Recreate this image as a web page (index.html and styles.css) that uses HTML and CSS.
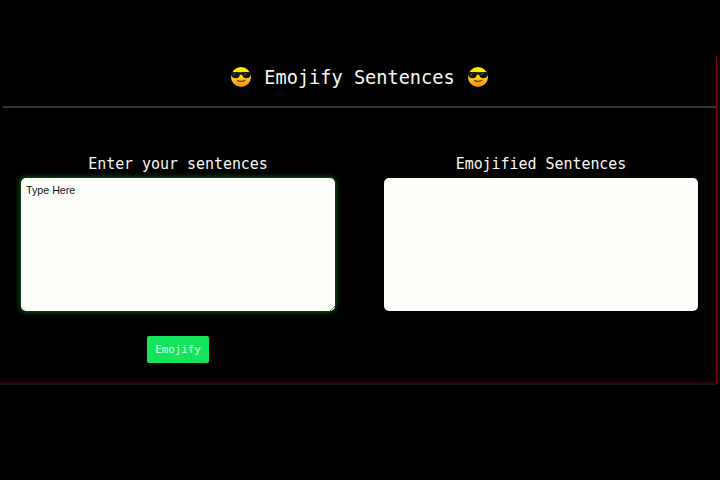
FILE: index.html
```html
<!DOCTYPE html>
<html lang="en">
<head>
<meta charset="utf-8">
<title>Emojify Sentences</title>
<link rel="stylesheet" href="styles.css">
</head>
<body>
<svg width="0" height="0" class="defs" aria-hidden="true">
  <defs>
    <linearGradient id="face" x1="0" y1="0" x2="0" y2="1">
      <stop offset="0" stop-color="#fff200"/>
      <stop offset=".5" stop-color="#fbd51c"/>
      <stop offset="1" stop-color="#f08a12"/>
    </linearGradient>
    <symbol id="cool" viewBox="0 0 22 22">
      <circle cx="11" cy="11" r="10" fill="url(#face)"/>
      <path d="M.5 6.200Q6 5.600 11 6.300Q16 5.600 21.500 6.200L21 8.200Q20.300 12.300 16.200 12.300Q13.100 12.300 12 8.800Q11 8 10 8.800Q8.900 12.300 5.800 12.300Q1.700 12.300 1 8.200Z" fill="#11130f"/>
      <path d="M3.200 9.300L5.500 7M14 9.300L16.300 7" stroke="#77776b" stroke-width="1"/>
      <path d="M7.500 14.600Q11.500 16.400 15 14.200" fill="none" stroke="#60400b" stroke-width="1.300" stroke-linecap="round"/>
    </symbol>
  </defs>
</svg>
<main class="app">
  <h1 class="title">
    <svg class="emoji"><use href="#cool"/></svg>
    <span>Emojify Sentences</span>
    <svg class="emoji"><use href="#cool"/></svg>
  </h1>
  <div class="columns">
    <section class="column">
      <h2 class="label">Enter your sentences</h2>
      <textarea class="box input">Type Here</textarea>
      <button class="button">Emojify</button>
    </section>
    <section class="column">
      <h2 class="label">Emojified Sentences</h2>
      <div class="box"></div>
    </section>
  </div>
</main>
</body>
</html>
```
FILE: styles.css
```css
* { box-sizing: border-box; }
body {
  margin: 0;
  padding-top: 56px;
  height: 480px;
  overflow: hidden;
  background: #000;
  color: #f8f8f4;
  font-family: "DejaVu Sans Mono", monospace;
}
.defs { position: absolute; }
.app {
  width: 717px;
  height: 328px;
  border-right: 1px solid #7a0010;
  border-bottom: 2px solid #2e0206;
  box-shadow: 1px 0 0 #30000a, 0 1px 0 #201415;
}
.title {
  display: flex;
  justify-content: center;
  align-items: center;
  gap: 12px;
  height: 52px;
  margin: 0 0 0 3px;
  padding-bottom: 7px;
  border-bottom: 2px solid #343431;
  font-size: 18.6px;
  font-weight: 400;
  line-height: 22px;
  white-space: nowrap;
}
.emoji { width: 22px; height: 22px; margin-bottom: 2px; }
.columns {
  display: grid;
  grid-template-columns: 314px 314px;
  column-gap: 49px;
  padding: 47px 0 0 21px;
}
.column {
  display: flex;
  flex-direction: column;
  align-items: center;
}
.label {
  margin: 0;
  height: 23px;
  font-size: 15px;
  letter-spacing: -0.05px;
  font-weight: 400;
  line-height: 18px;
}
.box {
  width: 314px;
  height: 133px;
  border-radius: 5px;
  background: #fefffa;
}
.input {
  display: block;
  margin: 0;
  padding: 6px 5px;
  border: 0;
  outline: 0;
  color: #111;
  font: 10.7px/13px "Liberation Sans", Arial, sans-serif;
  box-shadow: 0 0 5px 1px #086a10;
}
.input::-webkit-resizer {
  background: linear-gradient(135deg, transparent 82%, #71806f 82%, #71806f 86%, transparent 86%);
}
.button {
  width: 62px;
  height: 27px;
  margin-top: 25px;
  padding: 0;
  border: 0;
  border-radius: 2px;
  background: #16e35c;
  color: #d9ffe0;
  font: 10.8px/27px "DejaVu Sans Mono", monospace;
}
```
